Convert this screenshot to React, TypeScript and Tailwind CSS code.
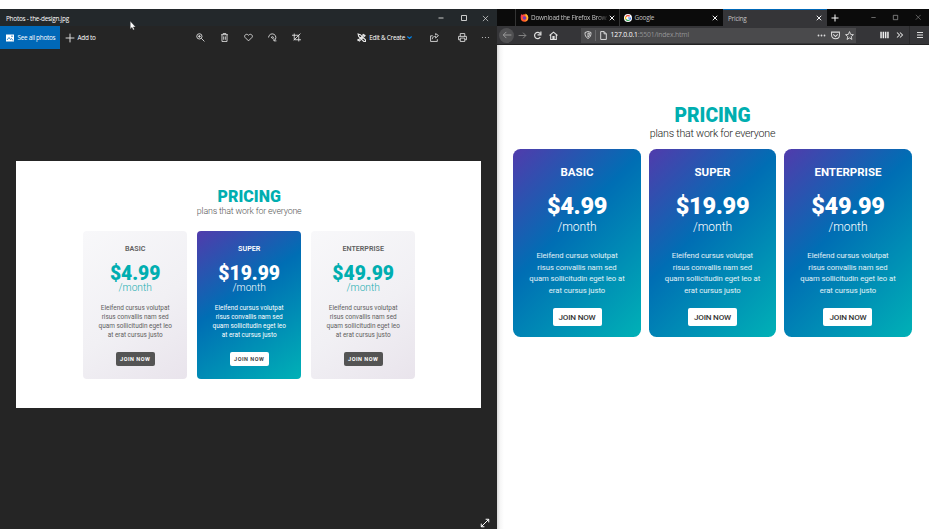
import React from "react";

type IconProps = { size?: number; className?: string; children: React.ReactNode; w?: number };

function Icon({ size = 9, className = "", children, w = 1.5 }: IconProps) {
  return (
    <svg width={size} height={size} viewBox="0 0 16 16" fill="none" stroke="currentColor" strokeWidth={w} className={`shrink-0 ${className}`}>
      {children}
    </svg>
  );
}

const Close = ({ size = 7, w = 1.6, className = "" }: { size?: number; w?: number; className?: string }) => (
  <Icon size={size} w={w} className={className}><path d="M2 2l12 12M14 2L2 14" /></Icon>
);

function PhotosTitleBar() {
  return (
    <div className="relative flex h-[17px] items-center bg-[#23282b] pl-[6px] text-white">
      <span className="pt-[2px] text-[6.400px] leading-[9px] tracking-[-0.230px] whitespace-nowrap">Photos - the-design.jpg</span>
      <svg className="absolute top-[12px] left-[129.5px] z-10" width="6" height="10" viewBox="0 0 6 10">
        <path d="M.3.3v7.6l1.7-1.6 1.2 2.6 1.2-.6-1.2-2.4h2.3z" fill="#fff" stroke="#333" strokeWidth=".3" />
      </svg>
      <div className="ml-auto flex items-center gap-[14.5px] pr-[8px] pt-[1px] text-[#ddd]">
        <Icon size={8} w={1.8}><path d="M3 8h10" /></Icon>
        <Icon size={8} w={1.8}><path d="M3 3h10v10H3z" /></Icon>
        <Close size={7} />
      </div>
    </div>
  );
}

function PhotosToolbar() {
  return (
    <div className="flex h-[23px] items-center bg-[#252525] text-[#e6e6e6]">
      <div className="flex h-full w-[60px] items-center bg-[#0068b8] pl-[6px] text-white">
        <svg width="8" height="8" viewBox="0 0 16 16" className="shrink-0">
          <path d="M0 1h16v14H0z" fill="#fff" />
          <path d="M2 12l4-5 3 4 2-2 3 4" fill="none" stroke="#0068b8" strokeWidth="1.5" />
          <path d="M11 3h2v3h-2z" fill="#0068b8" />
        </svg>
        <span className="ml-[3.5px] text-[6.400px] tracking-[-0.270px] whitespace-nowrap">See all photos</span>
      </div>
      <Icon size={10} w={1.5} className="ml-[5px]"><path d="M8 1v14M1 8h14" /></Icon>
      <span className="ml-[2.5px] w-[20px] text-[6.400px] tracking-[-0.270px] whitespace-nowrap text-white">Add to</span>
      <div className="ml-[98px] flex items-center gap-[15.2px]">
        <Icon><circle cx="6" cy="6" r="4.7" /><path d="M9.5 9.5L15 15M3.5 6h5M6 3.5v5" /></Icon>
        <Icon><path d="M2 3h12M5.5 3V1h5v2M3.5 3v12h9V3M6.5 6v6M9.5 6v6" /></Icon>
        <Icon><path d="M8 14L1.8 7.8C-.8 4.6 4.2-.2 8 4c3.8-4.2 8.8.6 6.2 3.8z" /></Icon>
        <Icon><path d="M1 8a6.500 6.500 0 1 1 10 5.500M15 14h-4.500V9.500M7.800 6.500a1.500 1.500 0 1 0 .1 0" /></Icon>
        <Icon><path d="M4 1v11h12M0 4h12v11M3 13L15 1" /></Icon>
      </div>
      <Icon w={2} className="ml-[56px]"><path d="M1 14L13 2M3.500 15L15 4M2 2l4 1 9 9v3h-3L3 6zM1 11l4 4M10 2l4 4" /></Icon>
      <span className="ml-[3px] w-[35px] text-[6.400px] tracking-[-0.250px] whitespace-nowrap text-white">Edit &amp; Create</span>
      <Icon size={5} w={4} className="ml-[3px] text-[#0086ee]"><path d="M1 5l7 6 7-6" /></Icon>
      <Icon className="ml-[17.500px]"><path d="M5 5H1v10h12v-4M4 11c0-4 3-5 6-5V9l5-4.500L10 1v3" /></Icon>
      <Icon className="ml-[19.500px]"><path d="M4 6V1h8v5M4 12H1V6h14v6h-3M4 9h8v6H4z" /></Icon>
      <svg width="9" height="3" viewBox="0 0 9 3" className="ml-[14px]" fill="#ccc"><circle cx="1.500" cy="1.500" r=".6" /><circle cx="4.500" cy="1.500" r=".6" /><circle cx="7.500" cy="1.500" r=".6" /></svg>
    </div>
  );
}

const lines = ["Eleifend cursus volutpat", "risus convallis nam sed"];

function DesignCard({ name, price, active = false }: { name: string; price: string; active?: boolean }) {
  const surface = active
    ? "bg-[linear-gradient(145deg,#513bac_0%,#006eb4_42%,#00b1b6_100%)] text-white"
    : "bg-[linear-gradient(145deg,#f8f8fa_0%,#f1f0f4_55%,#e9e4ec_100%)] text-[#606060]";
  return (
    <div className={`flex h-[148px] w-[104.5px] flex-col items-center rounded-[4px] pt-[13px] text-center ${surface}`}>
      <div className="text-[7.150px] leading-[10px] font-semibold">{name}</div>
      <div className={`mt-[9px] text-[19.300px] leading-[21px] font-black tracking-[0px] ${active ? "text-white" : "text-[#00aeb0]"}`}>{price}</div>
      <div className={`-mt-[1.500px] text-[10.200px] leading-[11px] font-light ${active ? "text-white" : "text-[#16aeb0]"}`}>/month</div>
      <div className="mt-[10.500px] text-[6.450px] leading-[9.300px] whitespace-nowrap">
        {lines.map((l) => <div key={l}>{l}</div>)}
        <div>quam sollicitudin eget leo</div>
        <div>at erat cursus justo</div>
      </div>
      <div className={`mt-[11px] flex h-[14.500px] w-[39px] items-center justify-center rounded-[2px] text-[5.500px] font-bold tracking-[0.5px] whitespace-nowrap ${active ? "bg-white text-[#444]" : "bg-[#545454] text-white"}`}>JOIN NOW</div>
    </div>
  );
}

function PhotosWindow() {
  return (
    <section className="flex h-full w-[497px] flex-col bg-[#252525] font-['Open_Sans',sans-serif]">
      <PhotosTitleBar />
      <PhotosToolbar />
      <div className="mt-[111.500px] ml-[16px] flex h-[247px] w-[465.400px] flex-col items-center bg-white pt-[26px] pl-[1px] font-[Roboto,sans-serif]">
        <h2 className="text-[16px] leading-[19px] font-black text-[#00aeb0]">PRICING</h2>
        <p className="text-[8.900px] leading-[11px] font-light tracking-[-0.190px] text-[#555]">plans that work for everyone</p>
        <div className="mt-[14px] flex gap-[9.500px]">
          <DesignCard name="BASIC" price="$4.99" />
          <DesignCard name="SUPER" price="$19.99" active />
          <DesignCard name="ENTERPRISE" price="$49.99" />
        </div>
      </div>
      <div className="mt-auto flex justify-end pr-[7px] pb-[1px] text-white">
        <Icon size={10} w={1.6}><path d="M2 14L14 2M9 2h5v5M2 9v5h5" /></Icon>
      </div>
    </section>
  );
}

function FirefoxLogo() {
  return (
    <svg width="9" height="9" viewBox="0 0 18 18" className="shrink-0">
      <circle cx="9" cy="10" r="7.500" fill="#ff5a2b" />
      <path d="M11 1c5 3 6.500 7 5 11-1.500 3-4 5-7 5 5-3 6-8 2-11z" fill="#ffbd2e" />
      <path d="M1.500 9C1 5 3 2 3 2l2 3 4 .5-3 3z" fill="#ff3b50" />
      <circle cx="9" cy="10" r="3.500" fill="#713fb5" />
    </svg>
  );
}

function GoogleLogo() {
  return (
    <svg width="8" height="8" viewBox="0 0 16 16" className="shrink-0">
      <circle cx="8" cy="8" r="8" fill="#fff" />
      <g fill="none" strokeWidth="2.400">
        <path d="M11.500 4.500A5 5 0 0 0 3.700 5.500" stroke="#ea4335" />
        <path d="M3.700 5.500a5 5 0 0 0 0 5" stroke="#fbbc05" />
        <path d="M3.700 10.500a5 5 0 0 0 7.500 1.300" stroke="#34a853" />
        <path d="M11.200 11.800A5 5 0 0 0 13 8H8" stroke="#4285f4" />
      </g>
    </svg>
  );
}

function BrowserTabs() {
  return (
    <div className="flex h-[17px] bg-[#0b0b0b] text-[6.400px] tracking-[-0.230px] text-[#c4c4c4]">
      <div className="w-[18px]" />
      <div className="flex w-[104px] items-center border-l border-[#333] pl-[4px]">
        <FirefoxLogo />
        <span className="ml-[2px] w-[76px] [mask-image:linear-gradient(90deg,#000_86%,#0003_100%)] pt-[1px] whitespace-nowrap">Download the Firefox Brows</span>
        <Close size={6} w={2.5} className="ml-[2px] text-white" />
      </div>
      <div className="flex w-[104px] items-center border-l border-[#333] pl-[4px]">
        <GoogleLogo />
        <span className="ml-[2.500px] pt-[1px]">Google</span>
        <Close size={6} w={2.5} className="mr-[5px] ml-auto text-white" />
      </div>
      <div className="flex w-[104px] items-center border-t border-[#0068b8] bg-[#353538] pl-[5px]">
        <span className="pt-[1px]">Pricing</span>
        <Close size={6} w={2.5} className="mr-[5px] ml-auto text-white" />
      </div>
      <div className="flex flex-1 items-center pl-[4px]">
        <Icon size={8} w={2} className="text-white"><path d="M8 1v14M1 8h14" /></Icon>
        <div className="ml-auto flex items-center gap-[15.500px] pr-[8px] text-[#999]">
          <Icon size={7} w={1.500}><path d="M3 8h10" /></Icon>
          <Icon size={7} w={1.700}><path d="M3 3h10v10H3z" /></Icon>
          <Close size={6.5} w={1.4} />
        </div>
      </div>
    </div>
  );
}

function BrowserNav() {
  return (
    <div className="flex h-[19px] items-center border-b border-[#222] bg-[#353538] text-[#dedede]">
      <div className="ml-[2px] flex size-[15px] items-center justify-center rounded-full bg-[#505052] text-[#9a9a9a]">
        <Icon size={10} w={1.6}><path d="M15 8H2M7 3L2 8l5 5" /></Icon>
      </div>
      <Icon size={9} w={1.6} className="ml-[3.500px] text-[#8a8a8a]"><path d="M1 8h13M9 3l5 5-5 5" /></Icon>
      <Icon size={9} w={2.2} className="ml-[6.500px]"><path d="M13 11a5.500 5.500 0 1 1-.5-6.500M14 1v6H8" /></Icon>
      <Icon size={9} w={2} className="ml-[6.500px]"><path d="M1 8l7-6 7 6M3 7v8h10V7M7 15v-5h2v5" /></Icon>
      <div className="ml-[23px] flex h-[15px] w-[275px] items-center bg-[#4a4a4c] pl-[3.500px]">
        <Icon size={8} w={1.8}><path d="M8 1l6 2c0 6-1 9-6 12C3 12 2 9 2 3zM8 4v8c3-2 3-4 3-7z" /></Icon>
        <div className="ml-[3px] h-[11px] w-px bg-[#68686a]" />
        <Icon size={9} w={1.7} className="ml-[2.500px]"><path d="M3 1h6l4 4v10H3zM9 1v4h4" /></Icon>
        <span className="ml-[3px] pt-[1px] text-[6.800px] tracking-[-0.150px] whitespace-nowrap text-[#949496]"><b className="font-medium text-white">127.0.0.1</b>:5501/index.html</span>
        <div className="ml-auto flex items-center gap-[5px] pr-[2px]">
          <svg width="9" height="3" viewBox="0 0 9 3" fill="#ddd"><circle cx="1.500" cy="1.500" r=".9" /><circle cx="4.500" cy="1.500" r=".9" /><circle cx="7.500" cy="1.500" r=".9" /></svg>
          <Icon size={9} w={1.8}><path d="M1 2h14v5c0 9-14 9-14 0zM4 6l4 4 4-4" /></Icon>
          <Icon size={9} w={1.6}><path d="M8 1l2 5 5 .5-4 3.500 1.300 5L8 12.300 3.700 15 5 10 1 6.500 6 6z" /></Icon>
        </div>
      </div>
      <svg width="9" height="8" viewBox="0 0 9 8" fill="#eee" className="ml-[24px]"><path d="M.3.7h1.500v6.600H.3zM2.600.7h1.500v6.600H2.600zM4.900.7h1.500v6.600H4.900zM7.200.7h1.500v6.600H7.200z" /></svg>
      <Icon size={8} w={2.1} className="ml-[7.500px]"><path d="M2 3l5 5-5 5M8 3l5 5-5 5" /></Icon>
      <div className="ml-[5px] h-full w-px bg-[#29292b]" />
      <Icon size={8} w={2} className="ml-[6px]"><path d="M2 3h12M2 8h12M2 13h12" /></Icon>
    </div>
  );
}

function PricingCard({ name, price }: { name: string; price: string }) {
  return (
    <div className="flex h-[188px] w-[127.800px] flex-col items-center rounded-[7.500px] bg-[linear-gradient(135deg,#513bac_0%,#006eb4_42%,#00b1b6_100%)] pt-[16px] text-center text-white">
      <div className="text-[11.500px] leading-[14px] font-bold">{name}</div>
      <div className="mt-[14px] text-[23.500px] leading-[27px] font-black tracking-[-0.3px]">{price}</div>
      <div className="text-[12px] leading-[14px] font-light">/month</div>
      <div className="mt-[16px] text-[7.700px] leading-[11.700px] font-normal tracking-[-0.030px] whitespace-nowrap text-white/90">
        {lines.map((l) => <div key={l}>{l}</div>)}
        <div>quam sollicitudin eget leo at</div>
        <div>erat cursus justo</div>
      </div>
      <div className="mt-[11px] flex h-[18px] w-[49px] items-center justify-center rounded-[2px] bg-white text-[8.100px] font-medium tracking-[-0.200px] whitespace-nowrap text-[#333]">JOIN NOW</div>
    </div>
  );
}

function BrowserWindow() {
  return (
    <section className="flex h-full w-[432px] flex-col bg-white font-['Open_Sans',sans-serif]">
      <BrowserTabs />
      <BrowserNav />
      <main className="flex flex-1 flex-col items-center bg-[linear-gradient(90deg,#d8d8d8_0px,#f6f6f6_3px,#fff_7px)] pt-[59px] pr-[1px] font-[Roboto,sans-serif]">
        <h1 className="text-[19.300px] leading-[23px] font-black text-[#00aeb0]">PRICING</h1>
        <p className="text-[10.700px] leading-[13px] font-light tracking-[-0.250px] text-[#222]">plans that work for everyone</p>
        <div className="mt-[9px] flex gap-[7.700px]">
          <PricingCard name="BASIC" price="$4.99" />
          <PricingCard name="SUPER" price="$19.99" />
          <PricingCard name="ENTERPRISE" price="$49.99" />
        </div>
      </main>
    </section>
  );
}

export default function App() {
  return (
    <div className="flex h-[529px] w-[948px] overflow-hidden bg-white pt-[9px]">
      <PhotosWindow />
      <BrowserWindow />
    </div>
  );
}
